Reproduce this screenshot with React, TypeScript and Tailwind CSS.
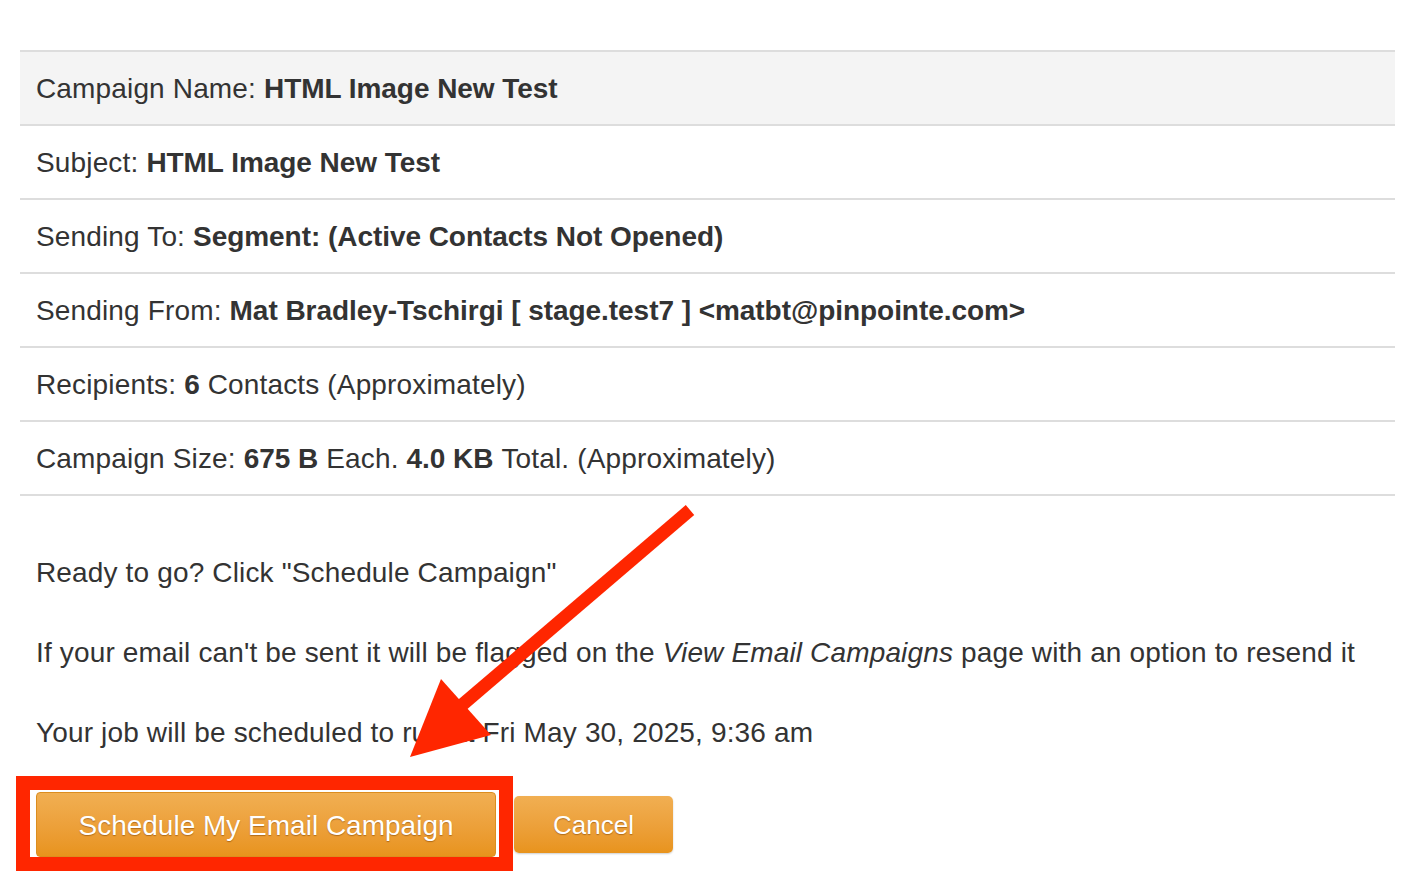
const rows: { label: string; parts: { t: string; b?: boolean }[]; shaded?: boolean }[] = [
  { label: "Campaign Name:", parts: [{ t: "HTML Image New Test", b: true }], shaded: true },
  { label: "Subject:", parts: [{ t: "HTML Image New Test", b: true }] },
  { label: "Sending To:", parts: [{ t: "Segment: (Active Contacts Not Opened)", b: true }] },
  {
    label: "Sending From:",
    parts: [{ t: "Mat Bradley-Tschirgi [ stage.test7 ] <matbt@pinpointe.com>", b: true }],
  },
  { label: "Recipients:", parts: [{ t: "6", b: true }, { t: "Contacts (Approximately)" }] },
  {
    label: "Campaign Size:",
    parts: [
      { t: "675 B", b: true },
      { t: "Each." },
      { t: "4.0 KB", b: true },
      { t: "Total. (Approximately)" },
    ],
  },
];

export default function App() {
  return (
    <div className="relative min-h-[894px] w-[1410px] bg-white font-['Liberation_Sans',Arial,sans-serif] text-[28px] tracking-[0.15px] text-[#333]">
      <div className="px-[20px] pt-[50px] pr-[15px]">
        <div className="border-t-2 border-[#dddddd]">
          {rows.map((r) => (
            <div
              key={r.label}
              className={`flex h-[74px] items-center border-b-2 border-[#dddddd] pl-[16px] pt-[2px] ${
                r.shaded ? "bg-[#f4f4f4]" : ""
              }`}
            >
              <span>{r.label}</span>
              {r.parts.map((p, i) => (
                <span
                  key={i}
                  className={`ml-[8px] ${p.b ? "font-bold tracking-[-0.05px]" : ""}`}
                >
                  {p.t}
                </span>
              ))}
            </div>
          ))}
        </div>

        <div className="pl-[16px] pt-[57px] leading-[40px]">
          <p>Ready to go? Click "Schedule Campaign"</p>
          <p className="mt-[40px]">
            If your email can't be sent it will be flagged on the <em>View Email Campaigns</em> page
            with an option to resend it
          </p>
          <p className="mt-[40px]">Your job will be scheduled to run at Fri May 30, 2025, 9:36 am</p>
        </div>

        <div className="mt-[39px] flex items-center pl-[16px]">
          <div className="relative">
            <button className="h-[65px] w-[460px] rounded-[4px] border border-[#dc8d1f] bg-gradient-to-b from-[#f1af52] to-[#e8931c] pt-[3px] text-[28px] tracking-normal text-white [text-shadow:0_1px_1px_rgba(120,60,0,0.5)]">
              Schedule My Email Campaign
            </button>
            <div className="pointer-events-none absolute -left-[20px] -right-[17px] -top-[16px] -bottom-[14px] border-[14px] border-[#ff2600]" />
          </div>
          <button className="ml-[18px] h-[57px] w-[159px] rounded-[5px] bg-gradient-to-b from-[#f1af52] to-[#e8931c] pt-[2px] text-[26px] tracking-normal text-white shadow-[0_1px_2px_rgba(0,0,0,0.2)] [text-shadow:0_1px_1px_rgba(120,60,0,0.5)]">
            Cancel
          </button>
        </div>
      </div>

      <svg
        className="pointer-events-none absolute left-0 top-0"
        width="1410"
        height="894"
        viewBox="0 0 1410 894"
      >
        <line x1="690" y1="510" x2="462" y2="705" stroke="#ff2600" strokeWidth="13" />
        <polygon points="410,757 441,679 491,735" fill="#ff2600" />
      </svg>
    </div>
  );
}
